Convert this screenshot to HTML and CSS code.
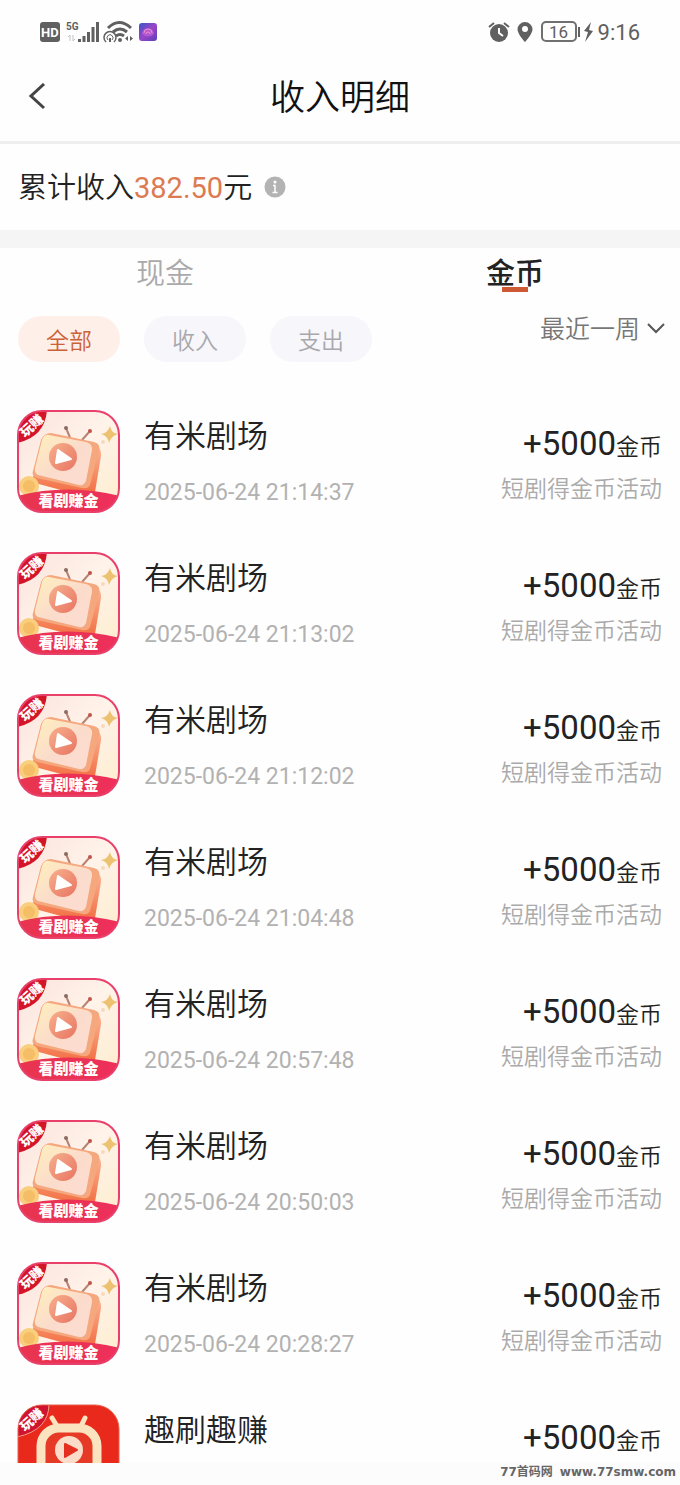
FILE: index.html
```html
<!DOCTYPE html>
<html lang="zh-CN">
<head>
    <meta charset="UTF-8">
    <meta name="viewport" content="width=device-width, initial-scale=1.0">
    <title>收入明细</title>
    <link rel="stylesheet" href="styles.css">
</head>
<body>
    <!-- shared app icons -->
    <svg class="sprite" width="0" height="0" aria-hidden="true">
        <defs>
            <linearGradient id="gCream" x1="0" y1="0" x2="1" y2="1">
                <stop offset="0" stop-color="#fbe3dc"/>
                <stop offset="0.5" stop-color="#fff3ea"/>
                <stop offset="1" stop-color="#fdeccb"/>
            </linearGradient>
            <linearGradient id="gFace" x1="0" y1="0" x2="1" y2="1">
                <stop offset="0" stop-color="#fff0bd"/>
                <stop offset="0.5" stop-color="#fbdccb"/>
                <stop offset="1" stop-color="#fcdcd2"/>
            </linearGradient>
            <linearGradient id="gSide" x1="0" y1="0" x2="0" y2="1">
                <stop offset="0" stop-color="#fbb898"/>
                <stop offset="1" stop-color="#f26a3d"/>
            </linearGradient>
            <linearGradient id="gPlay" x1="0" y1="0" x2="1" y2="1">
                <stop offset="0" stop-color="#f7b08c"/>
                <stop offset="1" stop-color="#e87463"/>
            </linearGradient>
            <linearGradient id="gBand" x1="0" y1="0" x2="1" y2="0">
                <stop offset="0" stop-color="#e8354f"/>
                <stop offset="1" stop-color="#ee2f5b"/>
            </linearGradient>
            <linearGradient id="gApp" x1="0" y1="0" x2="1" y2="1">
                <stop offset="0" stop-color="#3b57c8"/>
                <stop offset="0.5" stop-color="#9a45c8"/>
                <stop offset="1" stop-color="#5a3fb8"/>
            </linearGradient>
            <clipPath id="tile"><rect x="1" y="1" width="101" height="101" rx="24"/></clipPath>
        </defs>
        <symbol id="icon-youmi" viewBox="0 0 103 103">
            <g clip-path="url(#tile)">
                <rect width="103" height="103" fill="url(#gCream)"/>
                <path d="M54 30 49 18M65 30 73 21" stroke="#b98272" stroke-width="2" fill="none"/>
                <circle cx="49" cy="18" r="2" fill="#8d6b62"/>
                <circle cx="73" cy="21" r="2" fill="#c0564c"/>
                <path d="M16 66 18 73 70 87Q76 88 78 82L84 46Q85 38 77 34L66 36Z" fill="url(#gSide)"/>
                <path d="M34 23 77 32Q84 34 82 41L73 75Q71 79 65 78L20 68Q14 66 16 61L24 30Q27 23 34 23Z" fill="#f5a77e"/>
                <path d="M32 25 69 32Q76 34 75 40L69 71Q67 76 62 75L21 65Q17 63 18 58L25 30Q27 24 32 25Z" fill="url(#gFace)"/>
                <circle cx="46" cy="47" r="14" fill="url(#gPlay)"/>
                <path d="M41 40 54 49 39 53Z" fill="#fff" stroke="#fff" stroke-width="2" stroke-linejoin="round"/>
                <path d="M93 16Q94 23 101 24Q94 26 92 33Q91 26 84 24Q91 23 93 16Z" fill="#ecc16f"/>
                <circle cx="86" cy="32" r="2" fill="#f8d8bd"/>
                <circle cx="12" cy="76" r="10" fill="#f9ce7c"/>
                <circle cx="12" cy="76" r="6" fill="#f5bd66"/>
                <path d="M0 86Q50 73 103 86V103H0Z" fill="url(#gBand)"/>
                <path d="M0 0H30Q28 27 0 33Z" fill="#d41429"/>
            </g>
            <rect x="1" y="1" width="101" height="101" rx="24" fill="none" stroke="#e8406a" stroke-width="2"/>
        </symbol>
        <symbol id="icon-qushua" viewBox="0 0 103 103">
            <g clip-path="url(#tile)">
                <rect width="103" height="103" fill="#ea291d"/>
                <path d="M40 22 35 14M64 22 68 14" stroke="#fbe3bf" stroke-width="5" stroke-linecap="round"/>
                <rect x="24" y="24" width="56" height="60" rx="18" fill="#e63a27" stroke="#fbe3bf" stroke-width="9"/>
                <circle cx="52" cy="46" r="14" fill="#fbdcc9"/>
                <path d="M48 40 60 46 48 53Z" fill="#e5301f" stroke="#e5301f" stroke-width="2" stroke-linejoin="round"/>
                <path d="M0 0H32Q32 26 0 33Z" fill="#cf1430" stroke="#f49a86"/>
            </g>
            <rect x="1" y="1" width="101" height="101" rx="24" fill="none" stroke="#e8604c" stroke-width="1"/>
        </symbol>
    </svg>

    <div class="statusbar">
        <div class="status-left">
            <svg width="120" height="24" viewBox="0 0 120 24" aria-hidden="true">
                <rect x="0" y="2" width="20" height="20" rx="3" fill="#606060"/>
                <text class="hd" x="1" y="17">HD</text>
                <text class="net" x="26" y="10">5G</text>
                <path d="M30 21V15l-2 2M33 15v6l2-2" stroke="#c4c4c4" fill="none"/>
                <path d="M39.500 22v-3M44 22v-6M48.500 22V12M53 22V7M57.500 22V2" stroke="#606060" stroke-width="3" fill="none"/>
                <g fill="none" stroke="#606060" stroke-width="3">
                    <path d="M68 8Q79 -3 91 8"/>
                    <path d="M73 12Q80 6 87 12"/>
                    <path d="M76 16Q80 13 84 16"/>
                </g>
                <circle cx="80" cy="20" r="2" fill="#606060"/>
                <path d="M66 22a6 6 0 1 1 8 0" fill="none" stroke="#606060" stroke-width="1.500"/>
                <path d="M68 20a3 3 0 1 1 4 0" fill="none" stroke="#606060" stroke-width="1"/>
                <path d="M70 18v4" stroke="#606060" stroke-width="2"/>
                <path d="M88 16v5l-3-2.500zM90 16v5l3-2.500z" fill="#606060"/>
                <rect x="99" y="3" width="18" height="18" rx="3" fill="url(#gApp)"/>
                <path d="M102 14a6 6 0 1 1 12 0q-6 5-12 0Z" fill="#b457d2"/>
                <path d="M104 13a4 4 0 1 1 8 0M106 14a2 2 0 1 1 4 0" stroke="#ee90c8" fill="none"/>
            </svg>
        </div>
        <div class="status-right">
            <svg width="106" height="24" viewBox="0 0 106 24" aria-hidden="true">
                <circle cx="11" cy="13" r="9" fill="#606060"/>
                <path d="M11 8v5l4 3" stroke="#fff" stroke-width="2" fill="none"/>
                <path d="M1 7 6 3M16 3l5 4" stroke="#606060" stroke-width="2"/>
                <path d="M37 2a7.500 7.500 0 0 1 7.500 7.500C44.500 14 37 22 37 22S29.500 14 29.500 9.500A7.500 7.500 0 0 1 37 2Z" fill="#606060"/>
                <circle cx="37" cy="9" r="3" fill="#fff"/>
                <rect x="54" y="2" width="34" height="19" rx="4" fill="none" stroke="#707070" stroke-width="2"/>
                <text class="battery" x="61" y="18">16</text>
                <path d="M91 7v10" stroke="#606060" stroke-width="2"/>
                <path d="M103 2 96 11l4 1-3 10 8-11-4-1z" fill="#606060"/>
            </svg>
            <span class="clock">9:16</span>
        </div>
    </div>

    <header class="header">
        <button class="back" type="button" aria-label="返回">
            <svg width="18" height="28" viewBox="0 0 18 28"><path d="M16 1 3 13 16 25" fill="none" stroke="#444" stroke-width="3"/></svg>
        </button>
        <h1 class="title">收入明细</h1>
    </header>

    <section class="summary">
        <p class="summary-text">累计收入<span class="total">382.50</span>元</p>
        <svg width="22" height="22" viewBox="0 0 22 22" aria-hidden="true">
            <circle cx="11" cy="11" r="10.500" fill="#b3b3b3"/>
            <path d="M9 9.500H11V16M8.500 16.500h5" stroke="#fff" stroke-width="1.500" fill="none"/>
            <circle cx="11" cy="6" r="1.500" fill="#fff"/>
        </svg>
    </section>

    <nav class="tabs">
        <button class="tab" type="button">现金</button>
        <button class="tab active" type="button">金币</button>
    </nav>

    <div class="filters">
        <div class="pills">
            <button class="pill active" type="button">全部</button>
            <button class="pill" type="button">收入</button>
            <button class="pill" type="button">支出</button>
        </div>
        <div class="range">
            <select class="range-select" aria-label="时间范围">
                <option>最近一周</option>
            </select>
            <svg class="chevron" width="18" height="12" viewBox="0 0 18 12" aria-hidden="true"><path d="M1 2 9 10 17 2" fill="none" stroke="#555" stroke-width="2"/></svg>
        </div>
    </div>

    <main class="list">
        <article class="record">
            <div class="app-icon">
                <svg width="103" height="103"><use href="#icon-youmi"/></svg>
                <span class="tag">玩赚</span>
                <span class="slogan">看剧赚金</span>
            </div>
            <div class="info">
                <h2 class="name">有米剧场</h2>
                <time class="date">2025-06-24 21:14:37</time>
            </div>
            <div class="gain">
                <p class="amount">+5000<span class="unit">金币</span></p>
                <p class="reason">短剧得金币活动</p>
            </div>
        </article>
        <article class="record">
            <div class="app-icon">
                <svg width="103" height="103"><use href="#icon-youmi"/></svg>
                <span class="tag">玩赚</span>
                <span class="slogan">看剧赚金</span>
            </div>
            <div class="info">
                <h2 class="name">有米剧场</h2>
                <time class="date">2025-06-24 21:13:02</time>
            </div>
            <div class="gain">
                <p class="amount">+5000<span class="unit">金币</span></p>
                <p class="reason">短剧得金币活动</p>
            </div>
        </article>
        <article class="record">
            <div class="app-icon">
                <svg width="103" height="103"><use href="#icon-youmi"/></svg>
                <span class="tag">玩赚</span>
                <span class="slogan">看剧赚金</span>
            </div>
            <div class="info">
                <h2 class="name">有米剧场</h2>
                <time class="date">2025-06-24 21:12:02</time>
            </div>
            <div class="gain">
                <p class="amount">+5000<span class="unit">金币</span></p>
                <p class="reason">短剧得金币活动</p>
            </div>
        </article>
        <article class="record">
            <div class="app-icon">
                <svg width="103" height="103"><use href="#icon-youmi"/></svg>
                <span class="tag">玩赚</span>
                <span class="slogan">看剧赚金</span>
            </div>
            <div class="info">
                <h2 class="name">有米剧场</h2>
                <time class="date">2025-06-24 21:04:48</time>
            </div>
            <div class="gain">
                <p class="amount">+5000<span class="unit">金币</span></p>
                <p class="reason">短剧得金币活动</p>
            </div>
        </article>
        <article class="record">
            <div class="app-icon">
                <svg width="103" height="103"><use href="#icon-youmi"/></svg>
                <span class="tag">玩赚</span>
                <span class="slogan">看剧赚金</span>
            </div>
            <div class="info">
                <h2 class="name">有米剧场</h2>
                <time class="date">2025-06-24 20:57:48</time>
            </div>
            <div class="gain">
                <p class="amount">+5000<span class="unit">金币</span></p>
                <p class="reason">短剧得金币活动</p>
            </div>
        </article>
        <article class="record">
            <div class="app-icon">
                <svg width="103" height="103"><use href="#icon-youmi"/></svg>
                <span class="tag">玩赚</span>
                <span class="slogan">看剧赚金</span>
            </div>
            <div class="info">
                <h2 class="name">有米剧场</h2>
                <time class="date">2025-06-24 20:50:03</time>
            </div>
            <div class="gain">
                <p class="amount">+5000<span class="unit">金币</span></p>
                <p class="reason">短剧得金币活动</p>
            </div>
        </article>
        <article class="record">
            <div class="app-icon">
                <svg width="103" height="103"><use href="#icon-youmi"/></svg>
                <span class="tag">玩赚</span>
                <span class="slogan">看剧赚金</span>
            </div>
            <div class="info">
                <h2 class="name">有米剧场</h2>
                <time class="date">2025-06-24 20:28:27</time>
            </div>
            <div class="gain">
                <p class="amount">+5000<span class="unit">金币</span></p>
                <p class="reason">短剧得金币活动</p>
            </div>
        </article>
        <article class="record">
            <div class="app-icon">
                <svg width="103" height="103"><use href="#icon-qushua"/></svg>
                <span class="tag">玩赚</span>
            </div>
            <div class="info">
                <h2 class="name">趣刷趣赚</h2>
            </div>
            <div class="gain">
                <p class="amount">+5000<span class="unit">金币</span></p>
            </div>
        </article>
    </main>

    <footer class="footer">
        <span>77首码网</span>
        <span>www.77smw.com</span>
    </footer>
</body>
</html>
```
FILE: styles.css
```css
* { margin: 0; padding: 0; box-sizing: border-box; }

body {
    font-family: Roboto, "Noto Sans CJK SC", sans-serif;
    font-weight: 350;
    background: #fefefe;
    color: #222;
    height: 100vh;
    display: flex;
    flex-direction: column;
    overflow: hidden;
}

button, select {
    font-family: inherit;
    font-weight: inherit;
    border: none;
    background: none;
    cursor: pointer;
}

h1, h2 {
    font-weight: inherit;
}

svg {
    display: block;
    flex-shrink: 0;
}

.sprite {
    position: absolute;
}

/* system status bar */
.statusbar {
    height: 52px;
    padding: 12px 40px 0;
    display: flex;
    justify-content: space-between;
    align-items: flex-start;
    flex-shrink: 0;
    color: #606060;
}

.status-left, .status-right {
    display: flex;
    align-items: center;
    height: 40px;
}

.status-right {
    gap: 4px;
}

.clock {
    font-size: 22px;
    font-weight: 400;
}

.hd {
    font: bold 13px Roboto, sans-serif;
    fill: #fff;
}

.net {
    font: bold 10px Roboto, sans-serif;
    fill: #606060;
}

.battery {
    font: 17px Roboto, sans-serif;
    fill: #606060;
}

.header {
    height: 92px;
    padding: 0 28px;
    display: grid;
    grid-template-columns: 1fr auto 1fr;
    align-items: center;
    flex-shrink: 0;
    border-bottom: 3px solid #eee;
}

.back {
    justify-self: start;
}

.title {
    padding-top: 4px;
    font-size: 35px;
    line-height: 50px;
    color: #111;
}

.summary {
    height: 104px;
    padding: 0 18px;
    display: flex;
    align-items: center;
    gap: 12px;
    flex-shrink: 0;
    border-bottom: 18px solid #f5f5f5;
}

.summary-text {
    padding-top: 2px;
    font-size: 29px;
    line-height: 40px;
}

.total {
    font-weight: 400;
    color: #dc7a52;
}

.tabs {
    height: 68px;
    padding: 6px 20% 0;
    display: flex;
    justify-content: space-between;
    align-items: flex-start;
    flex-shrink: 0;
}

.tab {
    position: relative;
    font-size: 29px;
    line-height: 40px;
    color: #aaa;
}

.tab.active {
    color: #222;
    font-weight: 500;
}

.tab.active::after {
    content: "";
    position: absolute;
    left: 50%;
    bottom: 2px;
    width: 26px;
    height: 5px;
    margin-left: -13px;
    background: #cd5a35;
}

.filters {
    padding: 0 15px 0 18px;
    display: flex;
    justify-content: space-between;
    align-items: flex-start;
    flex-shrink: 0;
}

.pills {
    display: flex;
    gap: 24px;
}

.pill {
    width: 102px;
    height: 46px;
    border-radius: 23px;
    font-size: 23px;
    background: #f6f6fb;
    color: #a8a8ac;
}

.pill.active {
    background: #ffefe9;
    color: #cb6237;
}

.range {
    position: relative;
}

.range-select {
    appearance: none;
    height: 28px;
    padding-right: 24px;
    font-size: 25px;
    line-height: 28px;
    color: #777;
}

.chevron {
    position: absolute;
    right: 0;
    top: 6px;
    pointer-events: none;
}

/* income records */
.list {
    flex: 1;
    min-height: 0;
    padding: 48px 18px 0 17px;
    overflow: hidden;
}

.record {
    display: flex;
    gap: 24px;
    height: 103px;
    margin-bottom: 39px;
}

.app-icon {
    position: relative;
    width: 103px;
    height: 103px;
    font-weight: 900;
    color: #fff;
}

.tag {
    position: absolute;
    left: 2px;
    top: 7px;
    font-size: 13px;
    line-height: 18px;
    transform: rotate(-42deg);
}

.slogan {
    position: absolute;
    left: 0;
    right: 0;
    bottom: 2px;
    font-size: 15px;
    line-height: 20px;
    text-align: center;
}

.info {
    flex: 1;
    padding-top: 7px;
}

.name {
    font-size: 31px;
    line-height: 40px;
}

.date {
    display: block;
    margin-top: 18px;
    font-size: 23px;
    font-weight: 400;
    line-height: 36px;
    color: #b2b2b2;
}

.gain {
    padding-top: 12px;
    text-align: right;
}

.amount {
    font-size: 33px;
    font-weight: 400;
    line-height: 44px;
}

.unit {
    font-size: 23px;
    font-weight: 350;
    line-height: 1;
}

.reason {
    font-size: 23px;
    line-height: 48px;
    color: #aaa;
}

.footer {
    height: 22px;
    padding: 0 4px;
    display: flex;
    justify-content: flex-end;
    gap: 7px;
    flex-shrink: 0;
    background: #fcfcfc;
    font: bold 12px/18px "DejaVu Sans", "Noto Sans CJK SC", sans-serif;
    color: #666;
}
```
